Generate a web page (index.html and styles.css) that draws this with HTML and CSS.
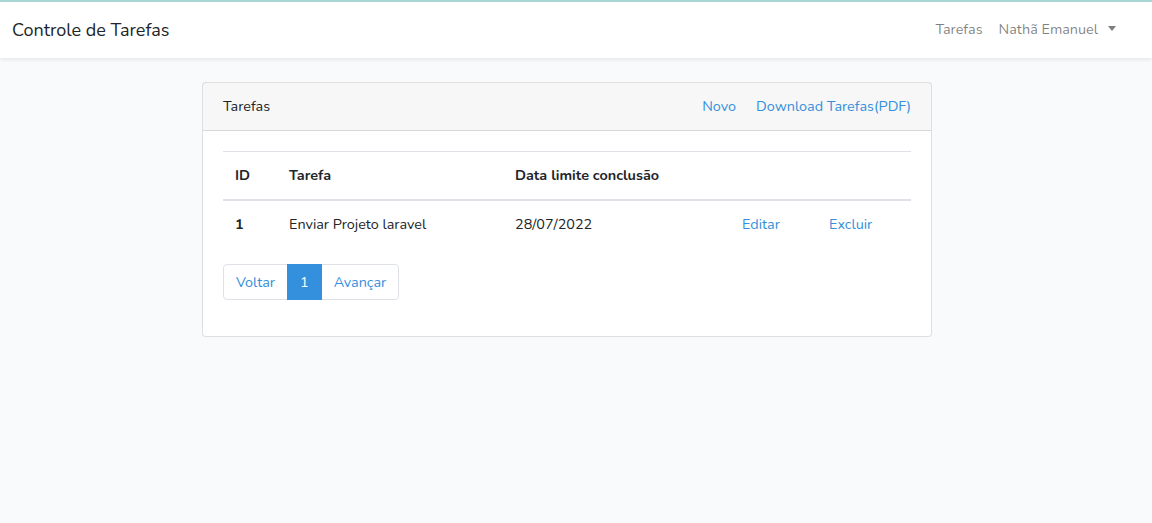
FILE: index.html
```html
<!DOCTYPE html>
<html lang="pt-BR">
<head>
<meta charset="utf-8">
<title>Controle de Tarefas</title>
<link rel="stylesheet" href="styles.css">
</head>
<body>
<nav class="navbar">
  <a class="brand" href="#">Controle de Tarefas</a>
  <ul class="nav">
    <li><a class="nav-link" href="#">Tarefas</a></li>
    <li><a class="nav-link dropdown" href="#">Nathã Emanuel<span class="caret"></span></a></li>
  </ul>
</nav>
<main class="main">
  <div class="card">
    <div class="card-header">
      <span class="title">Tarefas</span>
      <div class="actions">
        <a href="#" class="link">Novo</a>
        <a href="#" class="link">Download Tarefas(PDF)</a>
      </div>
    </div>
    <div class="card-body">
      <table class="table">
        <thead>
          <tr>
            <th class="c1">ID</th>
            <th class="c2">Tarefa</th>
            <th class="c3">Data limite conclusão</th>
            <th class="c4"></th>
            <th class="c5"></th>
          </tr>
        </thead>
        <tbody>
          <tr>
            <th class="c1">1</th>
            <td class="c2">Enviar Projeto laravel</td>
            <td class="c3">28/07/2022</td>
            <td class="c4"><a href="#" class="link">Editar</a></td>
            <td class="c5"><a href="#" class="link">Excluir</a></td>
          </tr>
        </tbody>
      </table>
      <ul class="pagination">
        <li class="page"><a href="#">Voltar</a></li>
        <li class="page active"><a href="#">1</a></li>
        <li class="page"><a href="#">Avançar</a></li>
      </ul>
    </div>
  </div>
</main>
</body>
</html>
```
FILE: styles.css
```css
* { box-sizing: border-box; }
html, body { margin: 0; padding: 0; }
body {
  background: #f8fafc;
  font-family: "Nunito", Lato, "Noto Sans", sans-serif;
  font-size: 14.4px;
  line-height: 1.6;
  color: #212529;
  border-top: 2px solid #a8d6d4;
  height: 523px;
}
a { text-decoration: none; }
.navbar {
  display: flex;
  align-items: center;
  justify-content: space-between;
  background: #fff;
  padding: 8px 28px 8px 12px;
  box-shadow: 0 2px 4px rgba(0,0,0,.075);
  height: 56px;
}
.brand {
  color: #212529;
  font-size: 18px;
  line-height: 28.8px;
  padding: 5px 0;
}
.nav {
  list-style: none;
  margin: 0;
  padding: 0;
  display: flex;
}
.nav-link {
  display: block;
  padding: 8px;
  color: rgba(0,0,0,.5);
}
.caret {
  display: inline-block;
  margin-left: 10px;
  vertical-align: 3px;
  border-top: 5px solid rgba(0,0,0,.5);
  border-left: 4.5px solid transparent;
  border-right: 4.5px solid transparent;
}
.main {
  padding-top: 24px;
  display: flex;
  padding-left: 202px;
}
.card {
  width: 730px;
  background: #fff;
  border: 1px solid rgba(0,0,0,.125);
  border-radius: 4px;
}
.card-header {
  display: flex;
  justify-content: space-between;
  padding: 12px 20px;
  background: rgba(0,0,0,.03);
  border-bottom: 1px solid rgba(0,0,0,.125);
}
.actions { display: flex; gap: 20px; }
.link { color: #3490dc; }
.card-body { padding: 20px; }
.table {
  width: 100%;
  border-collapse: collapse;
  margin-bottom: 16px;
}
.table th, .table td {
  padding: 12px;
  border-top: 1px solid #dee2e6;
  text-align: left;
  vertical-align: top;
}
.table th { font-weight: 700; }
.table thead th { border-bottom: 2px solid #dee2e6; }
.c1 { width: 54px; }
.c2 { width: 226px; }
.c3 { width: 227px; }
.c4 { width: 87px; }
.c5 { width: 94px; }
.pagination {
  display: flex;
  list-style: none;
  margin: 0 0 16px;
  padding: 0;
}
.page a {
  display: block;
  padding: 8px 12px;
  line-height: 18px;
  color: #3490dc;
  background: #fff;
  border: 1px solid #dee2e6;
  margin-left: -1px;
}
.page:first-child a { margin-left: 0; border-radius: 4px 0 0 4px; }
.page:last-child a { border-radius: 0 4px 4px 0; }
.page.active a {
  background: #3490dc;
  border-color: #3490dc;
  color: #fff;
  position: relative;
}
```
